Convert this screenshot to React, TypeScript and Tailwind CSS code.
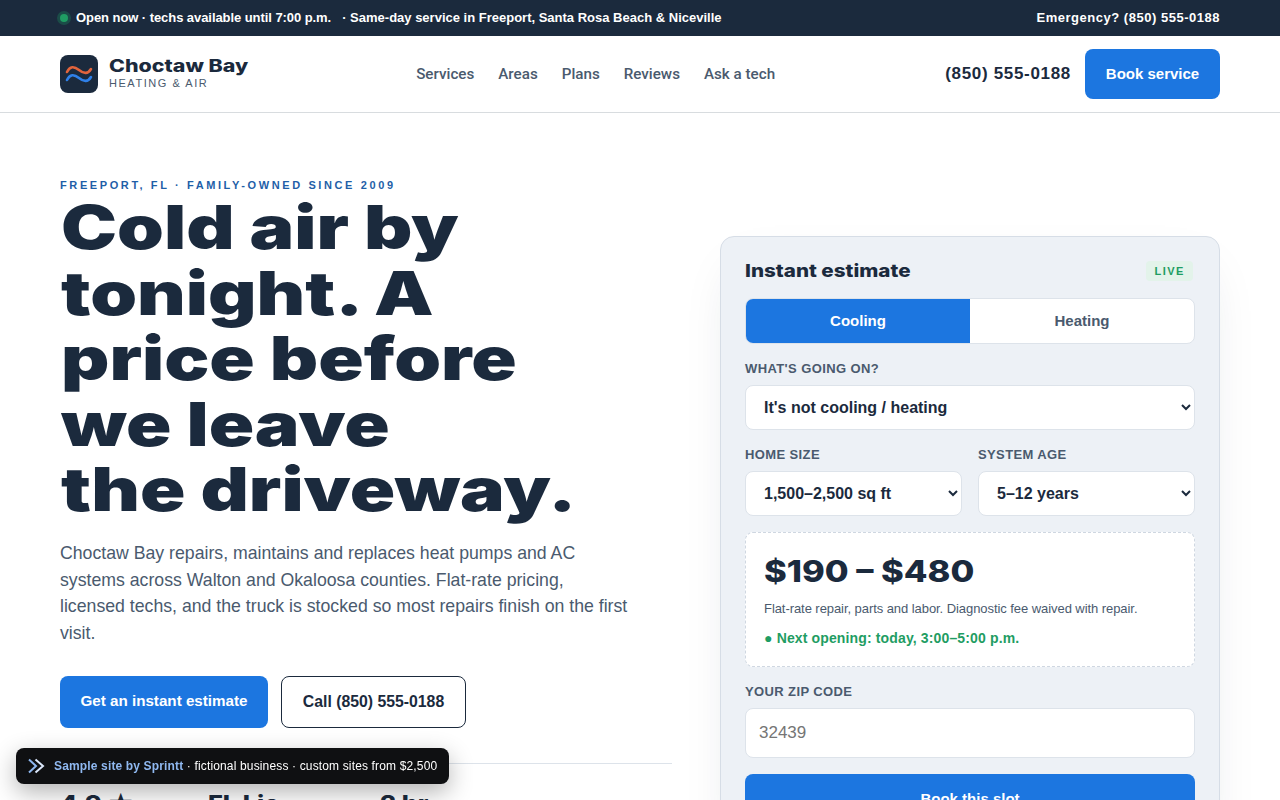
const sans = "font-['Liberation_Sans','Arial',sans-serif]";
const display = "font-['Inter',sans-serif] inline-block origin-left align-top";

const navLinks = ["Services", "Areas", "Plans", "Reviews", "Ask a tech"];

function Logo() {
  return (
    <svg width="38" height="38" viewBox="0 0 38 38" fill="none" strokeWidth="2.6" strokeLinecap="round" className="shrink-0 rounded-lg bg-[#1b2a3d]">
      <path d="M7 17C10 11 14 11 19 15S28 19 31 14" stroke="#e2643c" />
      <path d="M7 25C10 19 14 19 19 23S28 27 31 22" stroke="#2f80e8" />
    </svg>
  );
}

function Field({ label, value, className }: { label: string; value: string; className?: string }) {
  return (
    <label className={className}>
      <span className="mb-2 block text-[13px] font-bold leading-4 tracking-[0.03em] text-[#4a5a6e]">{label}</span>
      <select
        defaultValue={value}
        className="h-[45px] w-full rounded-lg border border-[#dde3ea] bg-white pl-[14px] pr-1 text-base font-bold text-[#1b2a3d]"
      >
        <option>{value}</option>
      </select>
    </label>
  );
}

function EstimateCard() {
  return (
    <aside className="rounded-[14px] border border-[#d6dde6] bg-[#edf1f6] px-6 pb-6 pt-[22px] shadow-[0_20px_50px_-20px_rgba(27,42,61,0.15)]">
      <div className="flex items-center justify-between">
        <h2 className={`${display} scale-x-[1.145] text-[18px] font-extrabold leading-6 text-[#1b2a3d]`}>Instant estimate</h2>
        <span className="mr-0.5 rounded bg-[#e3f3ea] px-2 py-0.5 text-[11px] font-bold tracking-[0.14em] text-[#1f9d63]">LIVE</span>
      </div>
      <div className="mt-[15px] flex h-[46px] overflow-hidden rounded-lg border border-[#dde3ea] bg-white text-[15px] font-bold">
        <button className="flex-1 bg-[#1c76e0] text-white">Cooling</button>
        <button className="flex-1 text-[#4a5a6e]">Heating</button>
      </div>
      <Field label="WHAT'S GOING ON?" value="It's not cooling / heating" className="mt-[17px] block" />
      <div className="mt-[17px] grid grid-cols-2 gap-4">
        <Field label="HOME SIZE" value="1,500–2,500 sq ft" />
        <Field label="SYSTEM AGE" value="5–12 years" />
      </div>
      <div className="mt-4 rounded-lg border border-dashed border-[#cfd7e1] bg-white px-[18px] pb-[18px] pt-5">
        <p className={`${display} scale-x-[1.15] text-[30px] font-extrabold leading-9 text-[#1b2a3d]`}>$190 – $480</p>
        <p className="mt-[10px] text-[13px] leading-5 tracking-[-0.005em] text-[#4a5a6e]">Flat-rate repair, parts and labor. Diagnostic fee waived with repair.</p>
        <p className="mt-[9px] text-sm font-bold leading-5 tracking-[0.01em] text-[#1f9d63]">● Next opening: today, 3:00–5:00 p.m.</p>
      </div>
      <label className="mt-[17px] block">
        <span className="mb-2 block text-[13px] font-bold leading-4 tracking-[0.03em] text-[#4a5a6e]">YOUR ZIP CODE</span>
        <input placeholder="32439" className="h-[50px] w-full rounded-lg border border-[#dde3ea] bg-white px-[13px] text-[17px] placeholder:text-[#757575]" />
      </label>
      <button className="mt-4 h-[50px] w-full rounded-lg bg-[#1c76e0] text-[15px] font-bold text-white">Book this slot</button>
    </aside>
  );
}

export default function App() {
  return (
    <div className={`${sans} min-h-screen bg-white text-[#1b2a3d]`}>
      {/* Top bar */}
      <div className="flex h-9 items-center justify-between bg-[#1b2a3d] px-[60px] text-[13px] font-bold text-white">
        <div className="flex items-center">
          <span className="mr-2 size-2 rounded-full bg-[#1f9d63] shadow-[0_0_0_3px_rgba(31,157,99,0.3)]" />
          <span className="tracking-[-0.005em]">Open now · techs available until 7:00 p.m.</span>
          <span className="ml-[11px]">· Same-day service in Freeport, Santa Rosa Beach &amp; Niceville</span>
        </div>
        <span className="tracking-[0.04em]">Emergency? (850) 555-0188</span>
      </div>

      {/* Header */}
      <header className="flex h-[77px] items-center justify-between border-b border-[#d8dcdf] px-[60px]">
        <a className="flex w-[186px] items-center gap-[11px]">
          <Logo />
          <span className="pb-[2px]">
            <span className={`${display} scale-x-[1.26] text-[17px] font-extrabold leading-5 text-[#1b2a3d]`}>Choctaw Bay</span>
            <span className="-mt-1 block text-[11px] leading-[14px] tracking-[0.14em] text-[#4a5a6e]">HEATING &amp; AIR</span>
          </span>
        </a>
        <nav className="flex gap-6 font-['Roboto',sans-serif] text-[15.2px] font-medium text-[#4a5a6e]">
          {navLinks.map((link) => (
            <a key={link}>{link}</a>
          ))}
        </nav>
        <div className="flex items-center gap-[14px]">
          <a className="text-[17px] font-bold tracking-[0.04em]">(850) 555-0188</a>
          <a className="flex h-[50px] w-[135px] items-center justify-center rounded-lg bg-[#1c76e0] text-[15px] font-bold text-white">Book service</a>
        </div>
      </header>

      {/* Hero */}
      <main className="grid grid-cols-[612px_500px] items-center gap-12 px-[60px] pb-16 pt-16">
        <section>
          <p className="text-[11px] font-bold leading-4 tracking-[0.237em] text-[#1f5fa8]">FREEPORT, FL · FAMILY-OWNED SINCE 2009</p>
          <h1 className={`${display} ml-px mt-[2px] scale-x-[1.25] whitespace-nowrap text-[60px] font-black leading-[65.6px] text-[#1b2a3d]`}>
            Cold air by
            <br />
            tonight. A
            <br />
            price before
            <br />
            we leave
            <br />
            the driveway.
          </h1>
          <p className="mt-[17px] max-w-[570px] text-[17.7px] leading-[26.7px] text-[#4a5a6e]">
            Choctaw Bay repairs, maintains and replaces heat pumps and AC systems across Walton and Okaloosa counties. Flat-rate pricing, licensed techs, and the truck is stocked so most repairs finish on the first visit.
          </p>
          <div className="mt-[29px] flex gap-[13px]">
            <a className="flex h-[52px] w-[208px] items-center justify-center rounded-lg bg-[#1c76e0] text-[15.2px] font-bold text-white">Get an instant estimate</a>
            <a className="flex h-[52px] w-[185px] items-center justify-center rounded-lg border border-[#1b2a3d] text-[15.8px] font-bold">Call (850) 555-0188</a>
          </div>
          <div className="mt-[35px] flex border-t border-[#dde3ea] pb-[70px] pt-[23px]">
            <div className="w-[148px]">
              <p className={`${display} scale-x-[1.15] text-[22px] font-extrabold leading-8`}>4.9 ★</p>
              <p className="text-[13px] text-[#4a5a6e]">Google rating</p>
            </div>
            <div className="w-[172px]">
              <p className={`${display} scale-x-[1.15] text-[22px] font-extrabold leading-8`}>FL Lic.</p>
              <p className="text-[13px] text-[#4a5a6e]">CAC1819340</p>
            </div>
            <div>
              <p className={`${display} scale-x-[1.15] text-[22px] font-extrabold leading-8`}>2 hr</p>
              <p className="text-[13px] text-[#4a5a6e]">Average arrival</p>
            </div>
          </div>
        </section>
        <EstimateCard />
      </main>

      {/* Sample badge */}
      <div className="fixed bottom-4 left-4 flex h-9 items-center gap-[9px] rounded-lg bg-[#0f1012] px-3 text-xs tracking-[0.0125em] text-white shadow-[0_8px_24px_rgba(0,0,0,0.3)]">
        <svg width="17" height="16" viewBox="0 0 17 16" fill="none" strokeWidth="2">
          <path d="M1 1.5 8 8l-7 6.5" stroke="#8fb8f0" />
          <path d="M7.5 1.5 15 8l-7.5 6.5" stroke="#dbe8fb" />
        </svg>
        <span>
          <b className="text-[#8fb8f0]">Sample site by Sprintt</b> · fictional business · custom sites from $2,500
        </span>
      </div>
    </div>
  );
}
